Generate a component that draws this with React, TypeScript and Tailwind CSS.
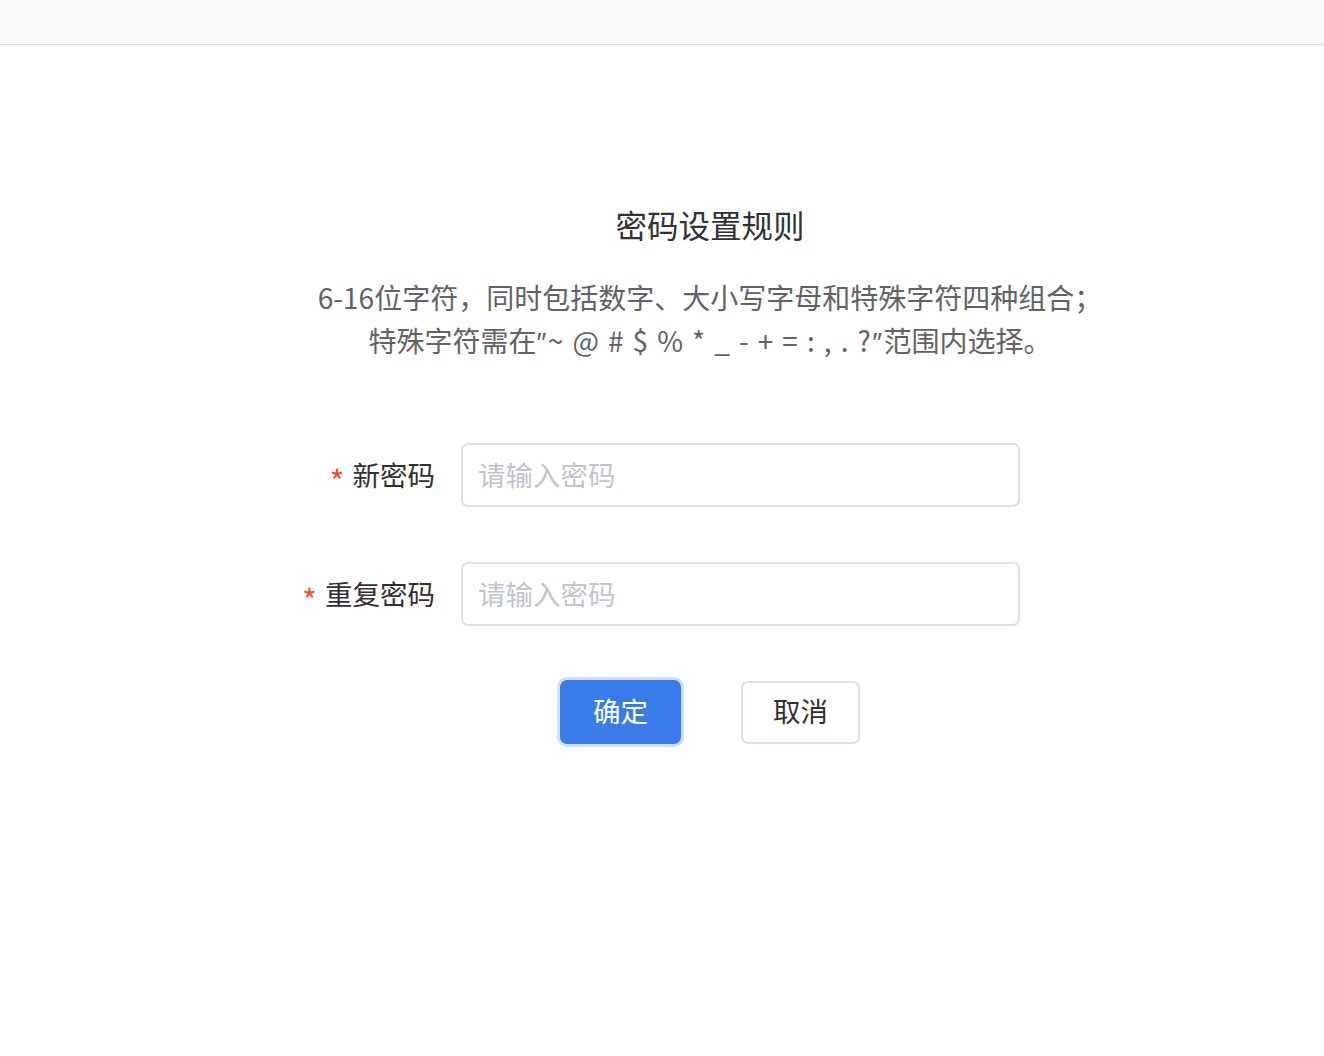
import React from "react";

export default function App() {
  const font = { fontFamily: '"Noto Sans CJK SC", "Noto Sans", sans-serif' };
  return (
    <div className="min-h-[1056px] w-full bg-white" style={font}>
      <div className="h-[45px] bg-[#fafafa] border-b border-[#dedede] shadow-[0_1px_2px_rgba(0,0,0,0.04)]" />
      <div className="flex flex-col">
        <div className="mt-[157px] pl-[96px] flex justify-center">
          <h1 className="text-[31.5px] leading-[45px] text-[#303133] font-normal">密码设置规则</h1>
        </div>
        <div className="mt-[29px] pl-[96px] flex justify-center">
          <p className="text-[28px] leading-[43px] text-[#606266] text-center">
            6-16位字符，同时包括数字、大小写字母和特殊字符四种组合；
            <br />
            特殊字符需在
            <span className="tracking-[1.4px]">
              <span className="font-['Liberation_Sans',sans-serif]">″</span>~&nbsp;@&nbsp;#&nbsp;$&nbsp;%&nbsp;*&nbsp;_&nbsp;-&nbsp;+&nbsp;=&nbsp;:&nbsp;,&nbsp;.&nbsp;?<span className="font-['Liberation_Sans',sans-serif]">″</span>
            </span>
            范围内选择。
          </p>
        </div>
        <div className="mt-[79px] ml-[275px] flex flex-col gap-[55px]">
          <div className="flex items-center gap-[26px]">
            <label className="w-[160px] flex justify-end items-center text-[27.5px] text-[#303133]">
              <span className="text-[#e5572f] mr-[8px] text-[32px] leading-none mt-[10px]">*</span>
              新密码
            </label>
            <input
              type="password"
              placeholder="请输入密码"
              className="w-[559px] h-[64px] rounded-[7px] border-2 border-[#dcdfe6] px-[15px] pb-[3px] text-[27.5px] text-[#303133] placeholder:text-[#c0c4cc] outline-none"
            />
          </div>
          <div className="flex items-center gap-[26px]">
            <label className="w-[160px] flex justify-end items-center text-[27.5px] text-[#303133]">
              <span className="text-[#e5572f] mr-[8px] text-[32px] leading-none mt-[10px]">*</span>
              重复密码
            </label>
            <input
              type="password"
              placeholder="请输入密码"
              className="w-[559px] h-[64px] rounded-[7px] border-2 border-[#dcdfe6] px-[15px] pb-[3px] text-[27.5px] text-[#303133] placeholder:text-[#c0c4cc] outline-none"
            />
          </div>
        </div>
        <div className="mt-[54px] ml-[560px] flex items-center gap-[60px]">
          <button className="w-[121px] h-[64px] pb-[3px] rounded-[7px] bg-[#3a7bea] text-white text-[27.5px] shadow-[0_0_0_3px_#cfe0fb]">
            确定
          </button>
          <button className="w-[119px] h-[63px] pb-[3px] rounded-[7px] border-2 border-[#dcdfe6] bg-white text-[#303133] text-[27.5px]">
            取消
          </button>
        </div>
      </div>
    </div>
  );
}
